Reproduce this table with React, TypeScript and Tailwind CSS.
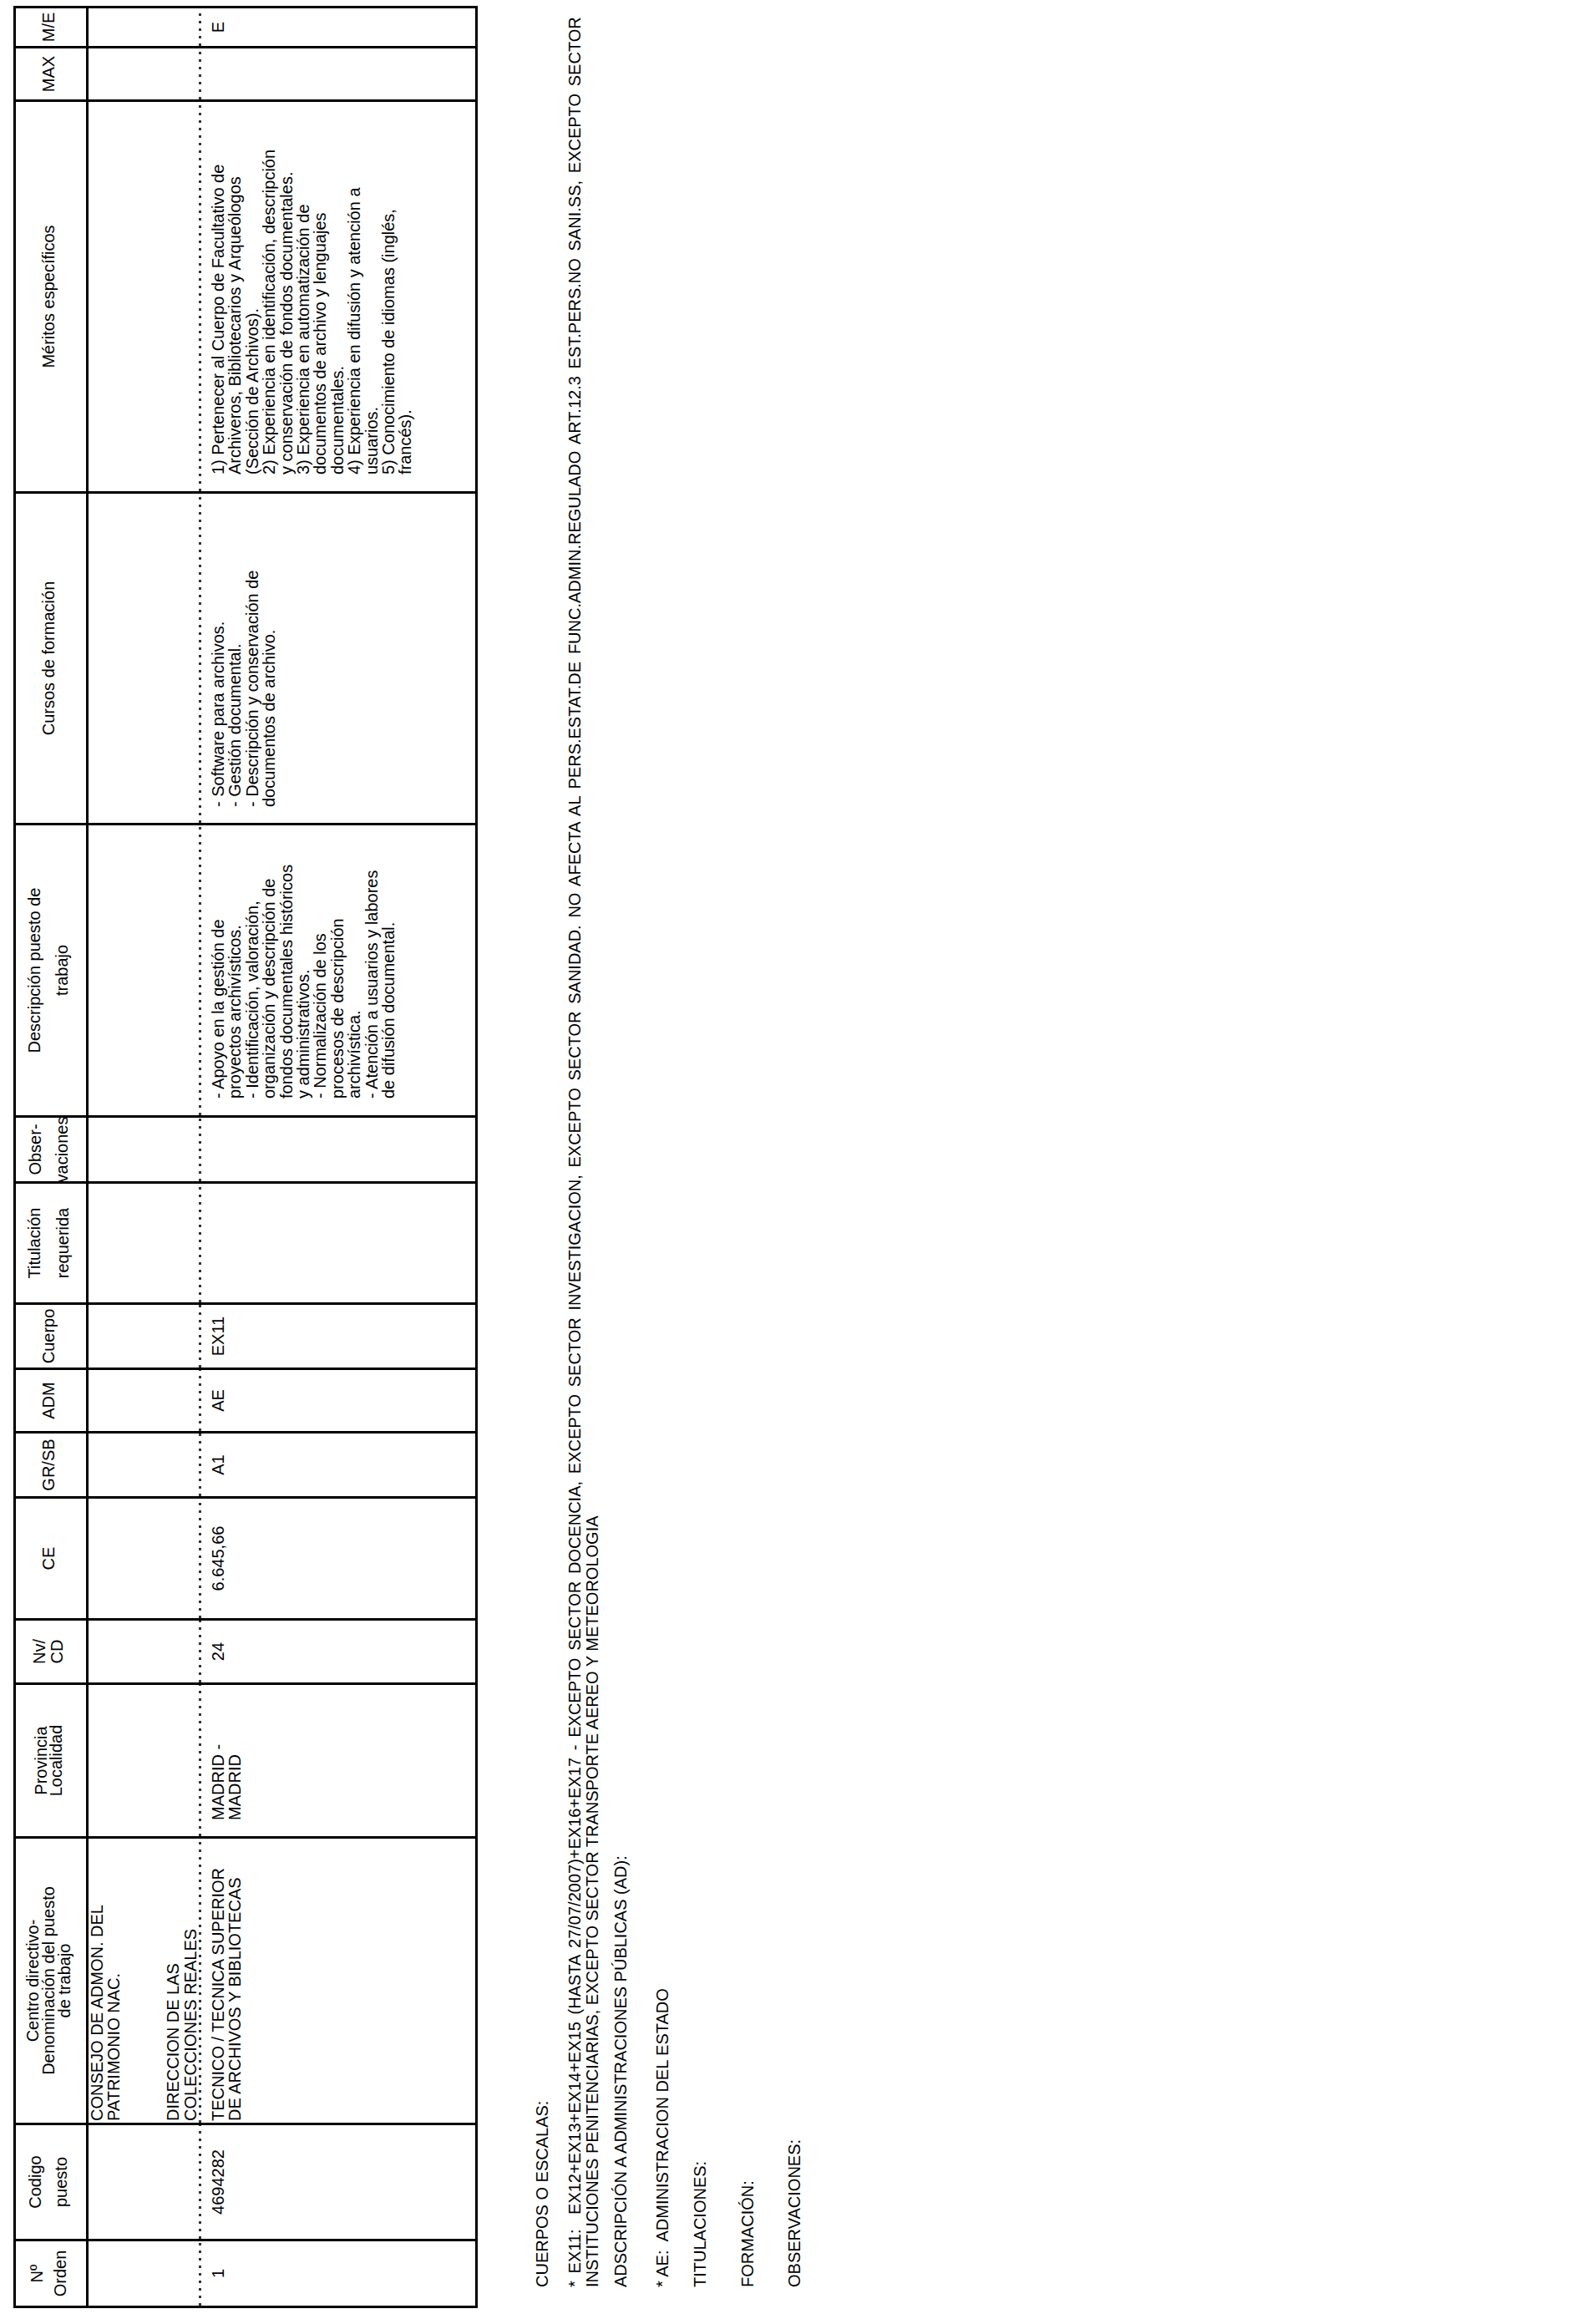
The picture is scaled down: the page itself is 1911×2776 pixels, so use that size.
import React from 'react';

// Landscape sheet (2776 x 1911) turned a quarter to the left, like the scanned page.

type Col = {
  head: string[];
  headClass: string;
  lines?: string[];
  bodyClass?: string;
  group?: boolean;
};

const dots =
  'h-[3px] bg-[repeating-linear-gradient(to_right,#333_0px,#333_3px,transparent_3px,transparent_9px)]';

const descripcion = [
  '- Apoyo en la gestión de',
  'proyectos archivísticos.',
  '- Identificación, valoración,',
  'organización y descripción de',
  'fondos documentales históricos',
  'y administrativos.',
  '- Normalización de los',
  'procesos de descripción',
  'archivística.',
  '- Atención a usuarios y labores',
  'de difusión documental.',
];

const cursos = [
  '- Software para archivos.',
  '- Gestión documental.',
  '- Descripción y conservación de',
  'documentos de archivo.',
];

const meritos = [
  '1) Pertenecer al Cuerpo de Facultativo de',
  'Archiveros, Bibliotecarios y Arqueólogos',
  '(Sección de Archivos).',
  '2) Experiencia en identificación, descripción',
  'y conservación de fondos documentales.',
  '3) Experiencia en automatización de',
  'documentos de archivo y lenguajes',
  'documentales.',
  '4) Experiencia en difusión y atención a',
  'usuarios.',
  '5) Conocimiento de idiomas (inglés,',
  'francés).',
];

const columns: Col[] = [
  { head: ['Nº', 'Orden'], headClass: 'leading-[28px]', lines: ['1'], bodyClass: 'text-center' },
  { head: ['Codigo', 'puesto'], headClass: 'leading-[31px]', lines: ['4694282'], bodyClass: 'text-center' },
  {
    head: ['Centro directivo-', 'Denominación del puesto', 'de trabajo'],
    headClass: 'leading-[19px]',
    lines: ['TECNICO / TECNICA SUPERIOR', 'DE ARCHIVOS Y BIBLIOTECAS'],
    bodyClass: 'pl-[2px]',
    group: true,
  },
  { head: ['Provincia', 'Localidad'], headClass: 'leading-[18px]', lines: ['MADRID -', 'MADRID'], bodyClass: 'pl-[19px]' },
  { head: ['Nv/', 'CD'], headClass: 'leading-[21px]', lines: ['24'], bodyClass: 'text-center' },
  { head: ['CE'], headClass: 'leading-[22px]', lines: ['6.645,66'], bodyClass: 'text-center' },
  { head: ['GR/SB'], headClass: 'leading-[22px]', lines: ['A1'], bodyClass: 'text-center' },
  { head: ['ADM'], headClass: 'leading-[22px]', lines: ['AE'], bodyClass: 'text-center' },
  { head: ['Cuerpo'], headClass: 'leading-[22px]', lines: ['EX11'], bodyClass: 'text-center' },
  { head: ['Titulación', 'requerida'], headClass: 'leading-[34px]' },
  { head: ['Obser-', 'vaciones'], headClass: 'leading-[32px]' },
  { head: ['Descripción puesto de', 'trabajo'], headClass: 'leading-[33px]', lines: descripcion, bodyClass: 'pl-[20px]' },
  { head: ['Cursos de formación'], headClass: 'leading-[22px]', lines: cursos, bodyClass: 'pl-[19px]' },
  { head: ['Méritos específicos'], headClass: 'leading-[22px]', lines: meritos, bodyClass: 'pl-[20px]' },
  { head: ['MAX'], headClass: 'leading-[22px]' },
  { head: ['M/E'], headClass: 'leading-[22px]', lines: ['E'], bodyClass: 'text-center' },
];

const Lines = ({ lines }: { lines: string[] }) => (
  <div>
    {lines.map((l, i) => (
      <div key={i} className="whitespace-pre">
        {l}
      </div>
    ))}
  </div>
);

const HeadCell = ({ col }: { col: Col }) => (
  <div className={`bg-white flex flex-col items-center justify-center text-center text-[20px] pb-[6px] ${col.headClass}`}>
    {col.head.map((h, i) => (
      <div key={i} className="whitespace-nowrap">
        {h}
      </div>
    ))}
  </div>
);

const BodyCell = ({ col }: { col: Col }) => (
  <div className="bg-white flex flex-col text-[20px] leading-[20.4px]">
    <div className="h-[132px] flex flex-col justify-between pl-[2px]">
      {col.group && (
        <>
          <Lines lines={['CONSEJO DE ADMON. DEL', 'PATRIMONIO NAC.']} />
          <Lines lines={['DIRECCION DE LAS', 'COLECCIONES REALES']} />
        </>
      )}
    </div>
    <div className={dots} />
    <div className={`pt-[10px] ${col.bodyClass ?? ''}`}>{col.lines && <Lines lines={col.lines} />}</div>
  </div>
);

export default function App() {
  return (
    <div className="w-[1911px] h-[2776px] overflow-hidden bg-white text-black font-['Liberation_Sans',Arial,sans-serif]">
      <div className="w-[2776px] h-[1911px] origin-top-left -rotate-90 translate-y-[2776px] pl-[13px] pt-[16px]">
        <div className="w-fit grid grid-cols-[77px_136px_340px_181px_74px_143px_75px_73px_75px_142px_76px_347px_394px_466px_61px_45px] grid-rows-[84px_463px] gap-[3px] p-[3px] bg-black">
          {columns.map((c, i) => (
            <HeadCell key={`h${i}`} col={c} />
          ))}
          {columns.map((c, i) => (
            <BodyCell key={`b${i}`} col={c} />
          ))}
        </div>

        <div className="ml-[25px] mt-[67px] text-[20px] leading-[20.4px] whitespace-pre">
          <div>CUERPOS O ESCALAS:</div>
          <div className="mt-[19px] [word-spacing:3.2px]">
            * EX11:  EX12+EX13+EX14+EX15 (HASTA 27/07/2007)+EX16+EX17 - EXCEPTO SECTOR DOCENCIA, EXCEPTO SECTOR INVESTIGACION, EXCEPTO SECTOR SANIDAD. NO AFECTA AL PERS.ESTAT.DE FUNC.ADMIN.REGULADO ART.12.3 EST.PERS.NO SANI.SS, EXCEPTO SECTOR
          </div>
          <div>INSTITUCIONES PENITENCIARIAS, EXCEPTO SECTOR TRANSPORTE AEREO Y METEOROLOGIA</div>
          <div className="mt-[14px]">ADSCRIPCIÓN A ADMINISTRACIONES PÚBLICAS (AD):</div>
          <div className="mt-[29px]">* AE:  ADMINISTRACION DEL ESTADO</div>
          <div className="mt-[25px]">TITULACIONES:</div>
          <div className="mt-[37px]">FORMACIÓN:</div>
          <div className="mt-[35px]">OBSERVACIONES:</div>
        </div>
      </div>
    </div>
  );
}
